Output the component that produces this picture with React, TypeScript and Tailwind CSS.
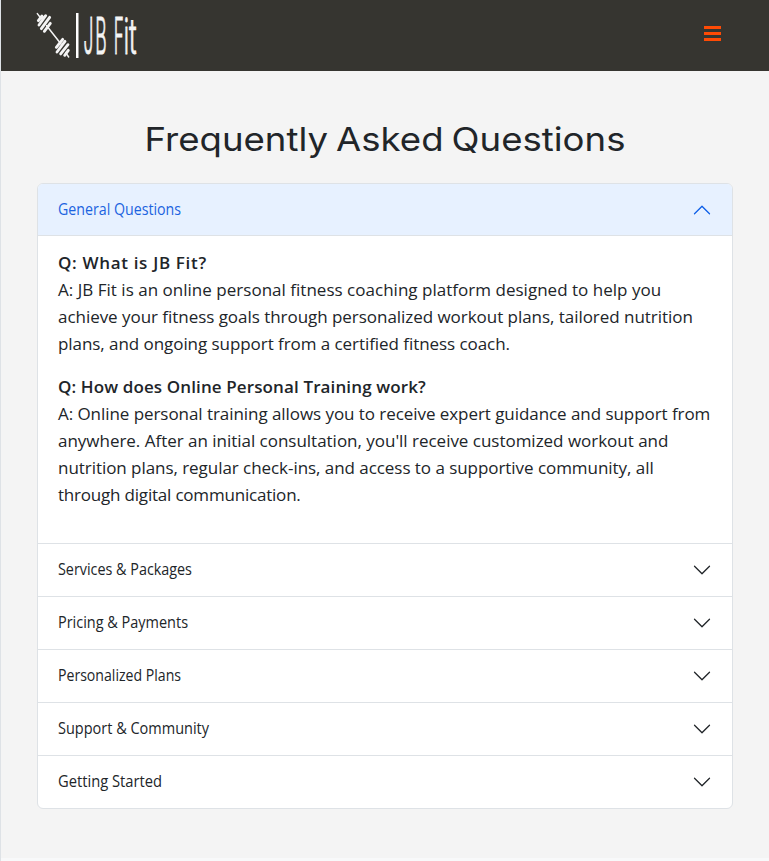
const rows = [
  { label: "Services & Packages", fit: "scale-x-[0.897]" },
  { label: "Pricing & Payments", fit: "scale-x-[0.904]" },
  { label: "Personalized Plans", fit: "scale-x-[0.881]" },
  { label: "Support & Community", fit: "scale-x-[0.906]" },
  { label: "Getting Started", fit: "scale-x-[0.92]" },
];

function Chevron({ up = false }: { up?: boolean }) {
  return (
    <svg viewBox="0 0 16 16" className={up ? "size-5 rotate-180 text-[#0d5fe8]" : "size-5 text-[#212529]"} fill="currentColor">
      <path
        fillRule="evenodd"
        d="M1.646 4.646a.5.5 0 0 1 .708 0L8 10.293l5.646-5.647a.5.5 0 0 1 .708.708l-6 6a.5.5 0 0 1-.708 0l-6-6a.5.5 0 0 1 0-.708z"
      />
    </svg>
  );
}

function Logo() {
  return (
    <svg width="180" height="71" viewBox="0 0 180 71" role="img" aria-label="JB Fit">
      <g transform="scale(0.33333)" stroke="#f4f4f4" strokeLinecap="round" fill="none">
        <path d="M112 41l10 13M140 77l43 55M197 158l9 13" strokeWidth="4.5" />
        <path d="M115 62l11-14M117 75l20-28M124 86l25-34M133 94l18-24" strokeWidth="8.5" />
        <path d="M169 142l19-24M171 156l24-32M182 162l22-28M194 166l11-15" strokeWidth="8.5" />
      </g>
      <rect x="76" y="13" width="2.5" height="45" fill="#fff" />
      <g fill="#f4f4f4" stroke="#f4f4f4" strokeWidth="0.7" fontFamily="Inter, sans-serif" fontSize="50" fontWeight="300">
        <text transform="translate(83.6 53.7) scale(0.35 1)" vectorEffect="non-scaling-stroke">J</text>
        <text transform="translate(95.2 53.7) scale(0.35 1)" vectorEffect="non-scaling-stroke">B</text>
        <text transform="translate(113.8 53.7) scale(0.34 1)" vectorEffect="non-scaling-stroke">F</text>
        <text transform="translate(123.8 53.7) scale(0.45 1)" vectorEffect="non-scaling-stroke">i</text>
        <text transform="translate(129 53.7) scale(0.51 1)" vectorEffect="non-scaling-stroke">t</text>
      </g>
    </svg>
  );
}

export default function App() {
  return (
    <div className="flex h-[861px] w-[769px] flex-col border-l border-[#dee2e6] bg-[#f4f4f4] font-['Open_Sans',sans-serif] text-[#212529]">
      <header className="flex h-[71px] shrink-0 items-center justify-between bg-[#363530] pr-12">
        <div className="-ml-px">
          <Logo />
        </div>
        <button aria-label="Menu" className="mb-1 flex w-[17px] flex-col gap-[3px]">
          <span className="h-[3px] bg-[#ff4b05]" />
          <span className="h-[3px] bg-[#ff4b05]" />
          <span className="h-[3px] bg-[#ff4b05]" />
        </button>
      </header>

      <main className="flex h-[787px] flex-col px-9 pt-12">
        <h1 className="h-10 scale-x-[1.108] text-center font-['Inter',sans-serif] text-[33px] leading-10 font-normal whitespace-nowrap [word-spacing:-2px]">
          Frequently Asked Questions
        </h1>

        <section className="mt-6 h-[626px] overflow-hidden rounded-md border border-[#dee2e6] bg-white">
          <button className="flex h-[52px] w-full items-center justify-between border-b border-[#dee2e6] bg-[#e7f1ff] px-5 text-base text-[#1b63e0]">
            <span className="origin-left scale-x-[0.887] pb-px">General Questions</span>
            <Chevron up />
          </button>
          <div className="flex h-[307px] flex-col gap-4 px-5 pt-[13px] text-[17px] leading-[27px] whitespace-nowrap">
            <div>
              <p className="font-semibold tracking-[0.67px]">Q: What is JB Fit?</p>
              <p className="tracking-[0.02px]">A: JB Fit is an online personal fitness coaching platform designed to help you</p>
              <p className="tracking-[-0.04px]">achieve your fitness goals through personalized workout plans, tailored nutrition</p>
              <p className="tracking-[-0.06px]">plans, and ongoing support from a certified fitness coach.</p>
            </div>
            <div>
              <p className="font-semibold tracking-[0.12px]">Q: How does Online Personal Training work?</p>
              <p className="tracking-[-0.06px]">A: Online personal training allows you to receive expert guidance and support from</p>
              <p className="tracking-[-0.02px]">anywhere. After an initial consultation, you'll receive customized workout and</p>
              <p className="tracking-[-0.05px]">nutrition plans, regular check-ins, and access to a supportive community, all</p>
              <p className="tracking-[-0.2px]">through digital communication.</p>
            </div>
          </div>
          {rows.map((row) => (
            <button key={row.label} className="flex h-[53px] w-full items-center justify-between border-t border-[#dee2e6] px-5 text-base">
              <span className={`origin-left pb-0.5 ${row.fit}`}>{row.label}</span>
              <Chevron />
            </button>
          ))}
        </section>
      </main>
      <div className="h-[3px] bg-[#f8f9fa]" />
    </div>
  );
}
